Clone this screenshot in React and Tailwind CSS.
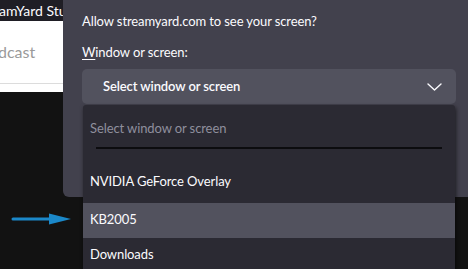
import React from 'react';

const font = { fontFamily: 'Lato, "Noto Sans", sans-serif' };

const Chevron = () => (
    <svg width="15" height="8" viewBox="0 0 15 8" fill="none">
        <path d="M1 1l6.5 6L14 1" stroke="#fbfbfe" strokeWidth="1.4" strokeLinecap="round" strokeLinejoin="round" />
    </svg>
);

const Arrow = () => (
    <svg width="62" height="14" viewBox="0 0 62 14">
        <path d="M2 7h40" stroke="#1b88c9" strokeWidth="3" strokeLinecap="round" />
        <path d="M38 1.5L60 7 38 12.5z" fill="#1b88c9" />
    </svg>
);

export default function App() {
    const items = [
        { label: 'NVIDIA GeForce Overlay', cls: 'pb-[6px]' },
        { label: 'KB2005', cls: 'bg-[#52525e]' },
        { label: 'Downloads', cls: '' },
    ];

    return (
        <div className="relative w-[468px] h-[269px] overflow-hidden bg-[#121212]" style={font}>
            {/* browser page behind */}
            <div className="h-[21px] w-[63px] overflow-hidden bg-[#1f1e25] text-[#fbfbfe] text-[14px] leading-[21px] whitespace-nowrap">
                <span className="-ml-[1px]">amYard Studio</span>
            </div>
            <div className="absolute top-0 left-[63px] right-0 h-[21px] bg-[#1f1e25]" />
            <div className="h-[71px] bg-white flex flex-col">
                <div className="h-[62px] w-[63px] overflow-hidden text-[16px] text-[#9a9a9a] pt-[23px] leading-[16px] whitespace-nowrap">
                    <span className="-ml-[2px]">dcast</span>
                </div>
                <div className="h-px bg-[#dcdcdc]" />
            </div>

            {/* permission dialog */}
            <div className="absolute left-[63px] top-0 w-[414px] h-[197px] rounded-b-[6px] bg-[#42414d] px-[19px] pt-[11px] text-[#fbfbfe] text-[13px] tracking-[-0.1px]">
                <div className="leading-[20px]">Allow streamyard.com to see your screen?</div>
                <div className="mt-[11px] leading-[20px]">
                    <span className="underline underline-offset-2">W</span>indow or screen:
                </div>
                <div className="mt-[7px] h-[35px] w-[374px] rounded-[5px] bg-[#52525e] flex items-center justify-between pl-[21px] pr-[14px]">
                    <span className="font-semibold">Select window or screen</span>
                    <Chevron />
                </div>

                {/* open dropdown */}
                <div className="absolute left-[20px] top-[105px] w-[372px] h-[200px] bg-[#2b2a33] rounded-t-[3px] shadow-[1px_2px_4px_rgba(0,0,0,0.6)]">
                    <div className="h-[42px] px-[7px] pt-[13px] leading-[20px] text-[#8f8f9d]">Select window or screen</div>
                    <div className="mx-[13px] h-[1.5px] bg-[#0c0c0f]" />
                    <div className="h-[19px]" />
                    {items.map((item) => (
                        <div key={item.label} className={`h-[35px] flex items-center px-[7px] ${item.cls}`}>
                            {item.label}
                        </div>
                    ))}
                </div>
            </div>

            {/* annotation */}
            <div className="absolute left-[11px] top-[212px]">
                <Arrow />
            </div>
        </div>
    );
}
